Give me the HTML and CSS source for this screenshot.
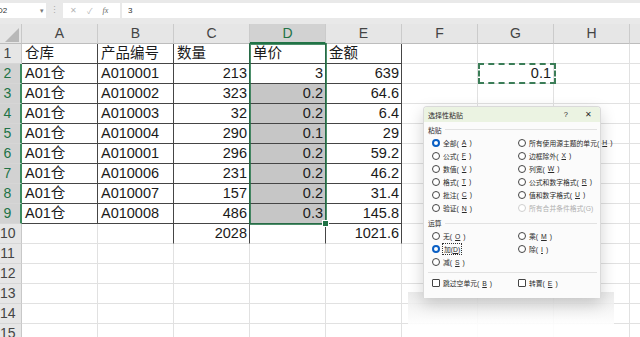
FILE: index.html
```html
<!DOCTYPE html>
<html lang="zh">
<head>
    <meta charset="UTF-8">
    <title>选择性粘贴</title>
    <link rel="stylesheet" href="styles.css">
</head>
<body>
<div class="page">
    <div class="toolbar">
        <div class="namebox"><span class="ref">D2</span><span class="arrow">▾</span></div>
        <div class="dots">⋮</div>
        <div class="fxbox">
            <span class="ico">✕</span>
            <span class="ico">✓</span>
            <span class="fx">fx</span>
        </div>
        <div class="formula">3</div>
    </div>

    <div class="sheet">
        <div class="corner"><svg width="22" height="20"><polygon points="19,4 19,18 5,18" fill="#b8b8b8"/></svg></div>
        <div class="ch">A</div><div class="ch">B</div><div class="ch">C</div><div class="ch on">D</div><div class="ch">E</div><div class="ch">F</div><div class="ch">G</div><div class="ch">H</div><div class="ch"></div>

        <div class="rh">1</div><div class="c t">仓库</div><div class="c t">产品编号</div><div class="c t">数量</div><div class="c t">单价</div><div class="c t">金额</div><div class="c"></div><div class="c"></div><div class="c"></div><div class="c"></div>
        <div class="rh on">2</div><div class="c t">A01仓</div><div class="c t">A010001</div><div class="c t n">213</div><div class="c t n">3</div><div class="c t n">639</div><div class="c"></div><div class="c n">0.1</div><div class="c"></div><div class="c"></div>
        <div class="rh on">3</div><div class="c t">A01仓</div><div class="c t">A010002</div><div class="c t n">323</div><div class="c t n sel">0.2</div><div class="c t n">64.6</div><div class="c"></div><div class="c"></div><div class="c"></div><div class="c"></div>
        <div class="rh on">4</div><div class="c t">A01仓</div><div class="c t">A010003</div><div class="c t n">32</div><div class="c t n sel">0.2</div><div class="c t n">6.4</div><div class="c"></div><div class="c"></div><div class="c"></div><div class="c"></div>
        <div class="rh on">5</div><div class="c t">A01仓</div><div class="c t">A010004</div><div class="c t n">290</div><div class="c t n sel">0.1</div><div class="c t n">29</div><div class="c"></div><div class="c"></div><div class="c"></div><div class="c"></div>
        <div class="rh on">6</div><div class="c t">A01仓</div><div class="c t">A010001</div><div class="c t n">296</div><div class="c t n sel">0.2</div><div class="c t n">59.2</div><div class="c"></div><div class="c"></div><div class="c"></div><div class="c"></div>
        <div class="rh on">7</div><div class="c t">A01仓</div><div class="c t">A010006</div><div class="c t n">231</div><div class="c t n sel">0.2</div><div class="c t n">46.2</div><div class="c"></div><div class="c"></div><div class="c"></div><div class="c"></div>
        <div class="rh on">8</div><div class="c t">A01仓</div><div class="c t">A010007</div><div class="c t n">157</div><div class="c t n sel">0.2</div><div class="c t n">31.4</div><div class="c"></div><div class="c"></div><div class="c"></div><div class="c"></div>
        <div class="rh on">9</div><div class="c t">A01仓</div><div class="c t">A010008</div><div class="c t n">486</div><div class="c t n sel">0.3</div><div class="c t n">145.8</div><div class="c"></div><div class="c"></div><div class="c"></div><div class="c"></div>
        <div class="rh">10</div><div class="c"></div><div class="c tv"></div><div class="c tv n">2028</div><div class="c tv"></div><div class="c tv n">1021.6</div><div class="c"></div><div class="c"></div><div class="c"></div><div class="c"></div>
        <div class="rh">11</div><div class="c"></div><div class="c"></div><div class="c"></div><div class="c"></div><div class="c"></div><div class="c"></div><div class="c"></div><div class="c"></div><div class="c"></div>
        <div class="rh">12</div><div class="c"></div><div class="c"></div><div class="c"></div><div class="c"></div><div class="c"></div><div class="c"></div><div class="c"></div><div class="c"></div><div class="c"></div>
        <div class="rh">13</div><div class="c"></div><div class="c"></div><div class="c"></div><div class="c"></div><div class="c"></div><div class="c"></div><div class="c"></div><div class="c"></div><div class="c"></div>
        <div class="rh">14</div><div class="c"></div><div class="c"></div><div class="c"></div><div class="c"></div><div class="c"></div><div class="c"></div><div class="c"></div><div class="c"></div><div class="c"></div>
        <div class="rh">15</div><div class="c"></div><div class="c"></div><div class="c"></div><div class="c"></div><div class="c"></div><div class="c"></div><div class="c"></div><div class="c"></div><div class="c"></div>

        <div class="selection"><span class="handle"></span></div>
        <div class="marquee"></div>
    </div>

    <div class="fade"></div>

    <div class="dialog">
        <div class="dlg-title">
            <span class="dlg-name">选择性粘贴</span>
            <span class="dlg-help">?</span>
            <span class="dlg-close">✕</span>
        </div>
        <div class="dlg-body">
            <div class="group"><span>粘贴</span><i></i></div>
            <div class="opts">
                <div class="opt"><span class="radio checked"></span>全部(<u>A</u>)</div>
                <div class="opt"><span class="radio"></span>所有使用源主题的单元(<u>H</u>)</div>
                <div class="opt"><span class="radio"></span>公式(<u>F</u>)</div>
                <div class="opt"><span class="radio"></span>边框除外(<u>X</u>)</div>
                <div class="opt"><span class="radio"></span>数值(<u>V</u>)</div>
                <div class="opt"><span class="radio"></span>列宽(<u>W</u>)</div>
                <div class="opt"><span class="radio"></span>格式(<u>T</u>)</div>
                <div class="opt"><span class="radio"></span>公式和数字格式(<u>R</u>)</div>
                <div class="opt"><span class="radio"></span>批注(<u>C</u>)</div>
                <div class="opt"><span class="radio"></span>值和数字格式(<u>U</u>)</div>
                <div class="opt"><span class="radio"></span>验证(<u>N</u>)</div>
                <div class="opt off"><span class="radio"></span>所有合并条件格式(G)</div>
            </div>
            <div class="group ops"><span>运算</span><i></i></div>
            <div class="opts">
                <div class="opt"><span class="radio"></span>无(<u>O</u>)</div>
                <div class="opt"><span class="radio"></span>乘(<u>M</u>)</div>
                <div class="opt"><span class="radio checked"></span><span class="focus">加(<u>D</u>)</span></div>
                <div class="opt"><span class="radio"></span>除(<u>I</u>)</div>
                <div class="opt"><span class="radio"></span>减(<u>S</u>)</div>
            </div>
            <div class="rule"></div>
            <div class="opts">
                <div class="opt"><span class="check"></span>跳过空单元(<u>B</u>)</div>
                <div class="opt"><span class="check"></span>转置(<u>E</u>)</div>
            </div>
        </div>
    </div>
</div>
</body>
</html>
```

FILE: styles.css
```css
body {
    margin: 0;
    font-family: "Liberation Sans", "Noto Sans CJK SC", sans-serif;
    background: #ffffff;
    overflow: hidden;
}
.page {
    position: relative;
    width: 640px;
    height: 337px;
    overflow: hidden;
}

/* formula bar */
.toolbar {
    display: flex;
    align-items: flex-start;
    height: 24px;
    padding-top: 3px;
    box-sizing: border-box;
    background: #e9e9e9;
    font-size: 8px;
    color: #333;
}
.namebox {
    width: 46px;
    height: 15px;
    background: #fff;
    display: flex;
    align-items: center;
    justify-content: space-between;
    padding-right: 2px;
    box-sizing: border-box;
}
.ref {
    margin-left: -3px;
}
.arrow {
    color: #777;
    font-size: 7px;
}
.dots {
    width: 17px;
    text-align: center;
    color: #aaa;
    font-size: 9px;
    line-height: 15px;
}
.fxbox {
    width: 57px;
    height: 15px;
    background: #fff;
    display: flex;
    align-items: center;
    gap: 10px;
    padding-left: 7px;
    box-sizing: border-box;
}
.ico {
    color: #b5b5b5;
    font-size: 8px;
}
.fx {
    font-family: "Liberation Serif", serif;
    font-style: italic;
    color: #666;
    font-size: 8px;
}
.formula {
    flex: 1;
    margin-left: 2px;
    height: 15px;
    line-height: 15px;
    background: #fff;
    padding-left: 6px;
}

/* grid */
.sheet {
    position: relative;
    display: grid;
    grid-template-columns: 22px repeat(8, 76px) 40px;
    grid-auto-rows: 20px;
    font-size: 14.5px;
    color: #1a1a1a;
}
.corner {
    background: #e6e6e6;
    border-right: 1px solid #c8c8c8;
    border-bottom: 1px solid #bdbdbd;
    box-sizing: border-box;
}
.corner svg {
    display: block;
}
.ch {
    background: #e6e6e6;
    border-right: 1px solid #cbcbcb;
    border-bottom: 1px solid #bdbdbd;
    box-sizing: border-box;
    text-align: center;
    line-height: 19px;
    font-size: 14px;
    color: #444;
}
.ch.on {
    background: #d2d2d2;
    color: #217346;
    border-bottom: 2px solid #217346;
}
.rh {
    background: #e6e6e6;
    border-right: 1px solid #c8c8c8;
    border-bottom: 1px solid #d6d6d6;
    box-sizing: border-box;
    padding-right: 6px;
    text-align: center;
    line-height: 19px;
    font-size: 14px;
    color: #444;
}
.rh.on {
    background: #d2d2d2;
    color: #217346;
    border-right: 2px solid #3c8a5d;
    padding-right: 5px;
}
.c {
    border-right: 1px solid #e1e1e1;
    border-bottom: 1px solid #e1e1e1;
    box-sizing: border-box;
    padding: 0 3px;
    line-height: 19px;
    white-space: nowrap;
    overflow: hidden;
}
.c.t {
    border-right-color: #454545;
    border-bottom-color: #454545;
}
.c.tv {
    border-right-color: #454545;
}
.c.n {
    text-align: right;
    padding-right: 2px;
}
.c.sel {
    background: #c6c6c6;
}
.selection {
    position: absolute;
    left: 249px;
    top: 19px;
    width: 78px;
    height: 182px;
    border: 2px solid rgba(33, 115, 70, 0.8);
    box-sizing: border-box;
}
.handle {
    position: absolute;
    right: -4px;
    bottom: -4px;
    width: 5px;
    height: 5px;
    background: #217346;
    border: 1px solid #fff;
}
.marquee {
    position: absolute;
    left: 478px;
    top: 39px;
    width: 78px;
    height: 21px;
    border: 2px dashed #3b7d57;
    box-sizing: border-box;
}

/* paste special dialog */
.fade {
    position: absolute;
    left: 408px;
    top: 292px;
    width: 206px;
    height: 45px;
    background: linear-gradient(to bottom, rgba(232, 232, 232, 0.85), rgba(255, 255, 255, 0.9) 75%);
}
.dialog {
    position: absolute;
    left: 423px;
    top: 106px;
    width: 178px;
    height: 192px;
    background: #fbfbfb;
    border: 1px solid #dadada;
    border-bottom: none;
    border-radius: 4px 4px 0 0;
    box-sizing: border-box;
    box-shadow: 0 6px 16px rgba(0, 0, 0, 0.18);
    font-size: 6.8px;
    color: #2a2a2a;
}
.dlg-title {
    display: flex;
    align-items: center;
    height: 15px;
    padding: 0 8px 0 4px;
    background: #ebf3e2;
    border-radius: 3px 3px 0 0;
    font-size: 7px;
}
.dlg-name {
    flex: 1;
}
.dlg-help {
    margin-right: 17px;
    font-size: 7.5px;
}
.dlg-close {
    font-size: 8px;
}
.dlg-body {
    padding: 1px 3px 0 4px;
}
.group {
    display: flex;
    align-items: center;
    gap: 3px;
    height: 13px;
}
.group i {
    flex: 1;
    height: 1px;
    background: #e2e2e2;
}
.group.ops {
    margin-top: 2px;
}
.opts {
    display: grid;
    grid-template-columns: 86px 1fr;
    grid-auto-rows: 13.1px;
    padding-left: 4px;
}
.opt {
    display: flex;
    align-items: center;
    gap: 3px;
    white-space: nowrap;
}
.opt.off {
    color: #b0b0b0;
}
.opt u {
    text-decoration: underline;
}
.radio {
    width: 6px;
    height: 6px;
    border: 1px solid #444;
    border-radius: 50%;
    background: #fff;
    flex: none;
}
.opt.off .radio {
    border-color: #cfcfcf;
}
.radio.checked {
    border: 2px solid #0a5fc4;
    width: 4px;
    height: 4px;
    background: #fff;
}
.focus {
    outline: 1px dotted #333;
    outline-offset: 0;
    padding: 0 1px;
}
.rule {
    height: 1px;
    background: #e2e2e2;
    margin: 3px 0 4px;
}
.check {
    width: 6px;
    height: 6px;
    border: 1px solid #444;
    border-radius: 1px;
    background: #fff;
    flex: none;
}
```
